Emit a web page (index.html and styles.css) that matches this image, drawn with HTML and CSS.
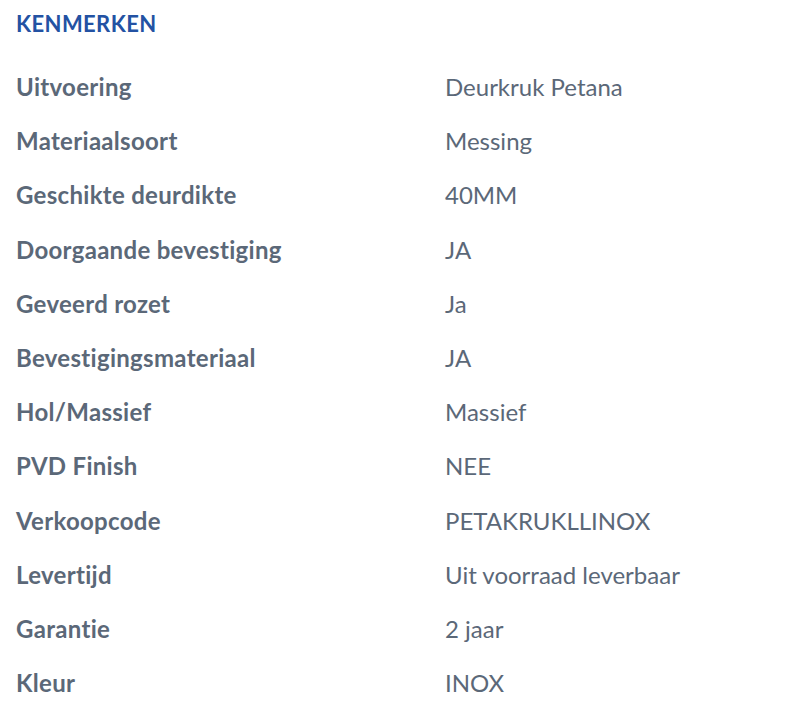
FILE: index.html
```html
<!DOCTYPE html>
<html lang="nl">
<head>
<meta charset="utf-8">
<title>Kenmerken</title>
<link rel="stylesheet" href="styles.css">
</head>
<body>
<section class="specs">
  <h2 class="specs-title">KENMERKEN</h2>
  <dl class="specs-list">
    <div class="row"><dt>Uitvoering</dt><dd>Deurkruk Petana</dd></div>
    <div class="row"><dt>Materiaalsoort</dt><dd>Messing</dd></div>
    <div class="row"><dt>Geschikte deurdikte</dt><dd>40MM</dd></div>
    <div class="row"><dt>Doorgaande bevestiging</dt><dd>JA</dd></div>
    <div class="row"><dt>Geveerd rozet</dt><dd>Ja</dd></div>
    <div class="row"><dt>Bevestigingsmateriaal</dt><dd>JA</dd></div>
    <div class="row"><dt>Hol/Massief</dt><dd>Massief</dd></div>
    <div class="row"><dt>PVD Finish</dt><dd>NEE</dd></div>
    <div class="row"><dt>Verkoopcode</dt><dd>PETAKRUKLLINOX</dd></div>
    <div class="row"><dt>Levertijd</dt><dd>Uit voorraad leverbaar</dd></div>
    <div class="row"><dt>Garantie</dt><dd>2 jaar</dd></div>
    <div class="row"><dt>Kleur</dt><dd>INOX</dd></div>
  </dl>
</section>
</body>
</html>
```
FILE: styles.css
```css
html, body {
  margin: 0;
  padding: 0;
  background: #ffffff;
}
body {
  font-family: "Lato", "Open Sans", sans-serif;
  color: #5b6878;
}
.specs {
  padding: 9px 16px 0 16px;
}
.specs-title {
  margin: 0;
  font-size: 22px;
  line-height: 30px;
  font-weight: 700;
  color: #2352a3;
  letter-spacing: 0.4px;
}
.specs-list {
  margin: 35px 0 0 0;
  padding: 0;
}
.row {
  display: grid;
  grid-template-columns: 429px 1fr;
  height: 54.2px;
  align-items: start;
}
.row dt {
  margin: 0;
  font-size: 24px;
  line-height: 26px;
  font-weight: 700;
  letter-spacing: 0.3px;
}
.row dd {
  margin: 0;
  font-size: 24px;
  line-height: 26px;
  font-weight: 400;
}
```
